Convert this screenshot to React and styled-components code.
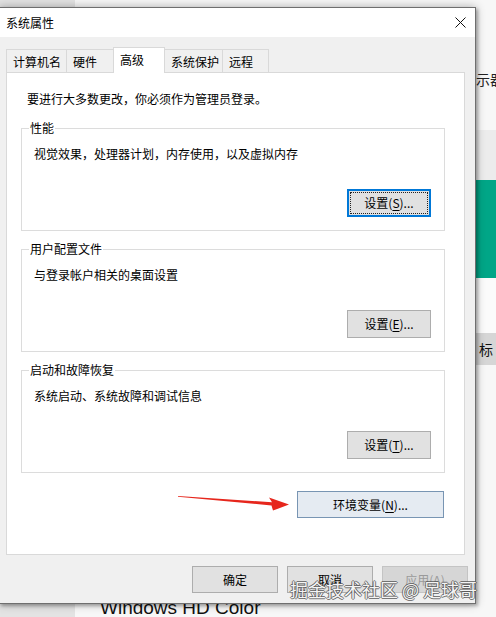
import React from "react";
import styled, { createGlobalStyle, css } from "styled-components";

const GlobalStyle = createGlobalStyle`
  html, body {
    margin: 0;
    padding: 0;
  }
  body {
    font-family: "Noto Sans CJK SC", "Noto Sans", sans-serif;
    background: #fff;
  }
`;

const Desktop = styled.div`
  position: relative;
  width: 496px;
  height: 617px;
  overflow: hidden;
  background: #fff;
`;

/* settings window behind the dialog */
const BackWindow = styled.div`
  display: flex;
  height: 100%;
`;

const Sidebar = styled.div`
  width: 75px;
  flex: none;
  background: #e3e3e3;
`;

const BackMain = styled.div`
  flex: 1;
  min-width: 0;
  display: flex;
  flex-direction: column;
  padding-top: 70px;
  background: #f7f7f7;
`;

const SideStack = styled.div`
  margin-left: 401px;
  display: flex;
  flex-direction: column;
`;

const SideLabel = styled.div`
  height: 60px;
  font-size: 14px;
  line-height: 18px;
  color: #222;
  white-space: nowrap;
`;

const SideBlock = styled.div`
  height: ${(p) => p.$h}px;
  background: ${(p) => p.$bg};
  font-size: 14px;
  line-height: ${(p) => p.$h}px;
  padding-left: 3px;
  color: #111;
`;

const BackHeading = styled.div`
  margin-top: auto;
  margin-left: 25px;
  margin-bottom: -3px;
  font-family: "Liberation Sans", sans-serif;
  font-size: 19px;
  line-height: 24px;
  color: #111;
`;

/* the dialog */
const Dialog = styled.div`
  position: absolute;
  left: -1px;
  top: 7px;
  width: 477px;
  height: 597px;
  box-sizing: border-box;
  border: 1px solid #6f6f6f;
  background: #f0f0f0;
  box-shadow: 0 0 9px rgba(0, 0, 0, 0.3), 2px 2px 3px rgba(0, 0, 0, 0.25);
  display: flex;
  flex-direction: column;
`;

const TitleBar = styled.div`
  height: 29px;
  flex: none;
  display: flex;
  align-items: center;
  padding-left: 6px;
  background: #fff;
  font-size: 12px;
  color: #000;
`;

const Title = styled.span`
  flex: 1;
`;

const CloseBox = styled.div`
  width: 30px;
  height: 29px;
  display: flex;
  align-items: center;
  justify-content: center;
`;

const Body = styled.div`
  flex: 1;
  display: flex;
  flex-direction: column;
  padding: 10px 10px 0 6px;
  min-height: 0;
`;

const TabRow = styled.div`
  display: flex;
  align-items: flex-end;
  height: 26px;
  position: relative;
  z-index: 1;
`;

const Tab = styled.div`
  box-sizing: border-box;
  width: ${(p) => p.$w}px;
  height: ${(p) => (p.$active ? 26 : 23)}px;
  margin-bottom: ${(p) => (p.$active ? 0 : 1)}px;
  margin-left: -1px;
  padding: 0 0 ${(p) => (p.$active ? 3 : 0)}px 6px;
  border: 1px solid #d9d9d9;
  border-bottom: none;
  background: ${(p) => (p.$active ? "#fff" : "#f0f0f0")};
  font-size: 12px;
  color: #000;
  display: flex;
  align-items: center;
  white-space: nowrap;
  &:first-child {
    margin-left: 0;
  }
`;

const Panel = styled.div`
  flex: 1;
  margin-top: -1px;
  background: #fff;
  border: 1px solid #d9d9d9;
  padding: 18px 19px 0 14px;
  display: flex;
  flex-direction: column;
`;

const Intro = styled.div`
  margin-left: 6px;
  font-size: 12px;
  line-height: 16px;
  color: #000;
`;

const Groups = styled.div`
  margin-top: 13px;
  display: flex;
  flex-direction: column;
  gap: 10px;
`;

const Group = styled.fieldset`
  margin: 0;
  min-width: 0;
  padding: 10px 13px 13px 12px;
  border: 1px solid #dcdcdc;
`;

const Legend = styled.legend`
  margin-left: -5px;
  padding: 0 1px;
  font-size: 12px;
  line-height: 16px;
  color: #000;
`;

const Desc = styled.div`
  font-size: 12px;
  line-height: 16px;
  color: #000;
`;

const ButtonRow = styled.div`
  display: flex;
  justify-content: flex-end;
  margin-top: ${(p) => p.$top || 0}px;
  margin-right: ${(p) => p.$right || 0}px;
`;

const toneStyles = {
  focus: css`
    border-color: #0078d7;
    box-shadow: inset 0 0 0 1px #0078d7;
    &::after {
      content: "";
      position: absolute;
      inset: 2px;
      border: 1px dotted #222;
    }
  `,
  hover: css`
    background: #e5ebf2;
    border-color: #7895b3;
  `,
  disabled: css`
    background: #d6d6d6;
    border-color: #c4c4c4;
    color: #9a9a9a;
  `,
};

const Btn = styled.button`
  position: relative;
  box-sizing: border-box;
  width: ${(p) => p.$w}px;
  height: ${(p) => p.$h || 28}px;
  padding: 0;
  background: #e1e1e1;
  border: 1px solid #adadad;
  font-family: "Noto Sans CJK SC", sans-serif;
  font-size: 12px;
  line-height: 1;
  color: #000;
  ${(p) => p.$tone && toneStyles[p.$tone]}
  u {
    text-underline-offset: 2px;
  }
`;

const Footer = styled.div`
  flex: none;
  display: flex;
  justify-content: flex-end;
  gap: 9px;
  padding: 11px 7px 10px;
`;

/* annotations drawn over the screenshot */
const Arrow = styled.svg`
  position: absolute;
  left: 176px;
  top: 494px;
`;

const Watermark = styled.div`
  position: absolute;
  left: 290px;
  top: 577px;
  font-size: 18px;
  line-height: 24px;
  color: rgba(255, 255, 255, 0.95);
  white-space: nowrap;
  text-shadow: 1px 0 0 rgba(80, 80, 80, 0.75), -1px 0 0 rgba(80, 80, 80, 0.75),
    0 1px 0 rgba(80, 80, 80, 0.75), 0 -1px 0 rgba(80, 80, 80, 0.75);
`;

const tabs = [
  { label: "计算机名", w: 61 },
  { label: "硬件", w: 48 },
  { label: "高级", w: 52, active: true },
  { label: "系统保护", w: 59 },
  { label: "远程", w: 47 },
];

const groups = [
  { title: "性能", desc: "视觉效果，处理器计划，内存使用，以及虚拟内存", key: "S", focus: true },
  { title: "用户配置文件", desc: "与登录帐户相关的桌面设置", key: "E" },
  { title: "启动和故障恢复", desc: "系统启动、系统故障和调试信息", key: "T" },
];

export default function App() {
  return (
    <Desktop>
      <GlobalStyle />
      <BackWindow>
        <Sidebar />
        <BackMain>
          <SideStack>
            <SideLabel>示器</SideLabel>
            <SideBlock $h={50} $bg="#ececec" />
            <SideBlock $h={98} $bg="#00a687" />
            <SideBlock $h={55} $bg="#fbfbfb" />
            <SideBlock $h={32} $bg="#d6d6d6">标</SideBlock>
          </SideStack>
          <BackHeading>Windows HD Color</BackHeading>
        </BackMain>
      </BackWindow>

      <Dialog>
        <TitleBar>
          <Title>系统属性</Title>
          <CloseBox>
            <svg width="11" height="11" viewBox="0 0 11 11">
              <path d="M0.5 0.5 L10.5 10.5 M10.5 0.5 L0.5 10.5" stroke="#111" strokeWidth="1" />
            </svg>
          </CloseBox>
        </TitleBar>
        <Body>
          <TabRow>
            {tabs.map((t) => (
              <Tab key={t.label} $w={t.w} $active={t.active}>
                {t.label}
              </Tab>
            ))}
          </TabRow>
          <Panel>
            <Intro>要进行大多数更改，你必须作为管理员登录。</Intro>
            <Groups>
              {groups.map((g) => (
                <Group key={g.title}>
                  <Legend>{g.title}</Legend>
                  <Desc>{g.desc}</Desc>
                  <ButtonRow $top={27}>
                    <Btn $w={84} $tone={g.focus ? "focus" : undefined}>
                      设置(<u>{g.key}</u>)...
                    </Btn>
                  </ButtonRow>
                </Group>
              ))}
            </Groups>
            <ButtonRow $top={18} $right={1}>
              <Btn $w={147} $h={27} $tone="hover">
                环境变量(<u>N</u>)...
              </Btn>
            </ButtonRow>
          </Panel>
        </Body>
        <Footer>
          <Btn $w={86} $h={27}>确定</Btn>
          <Btn $w={86} $h={27}>取消</Btn>
          <Btn $w={86} $h={27} $tone="disabled">
            应用(<u>A</u>)
          </Btn>
        </Footer>
      </Dialog>

      <Arrow width="118" height="20" viewBox="0 0 118 20">
        <path
          d="M2 2 L96 8.3 L93 3.6 L113 10.6 L97 16.6 L95.5 11.4 L2 2.7 Z"
          fill="#e6261c"
        />
      </Arrow>
      <Watermark>掘金技术社区 @ 足球哥</Watermark>
    </Desktop>
  );
}
